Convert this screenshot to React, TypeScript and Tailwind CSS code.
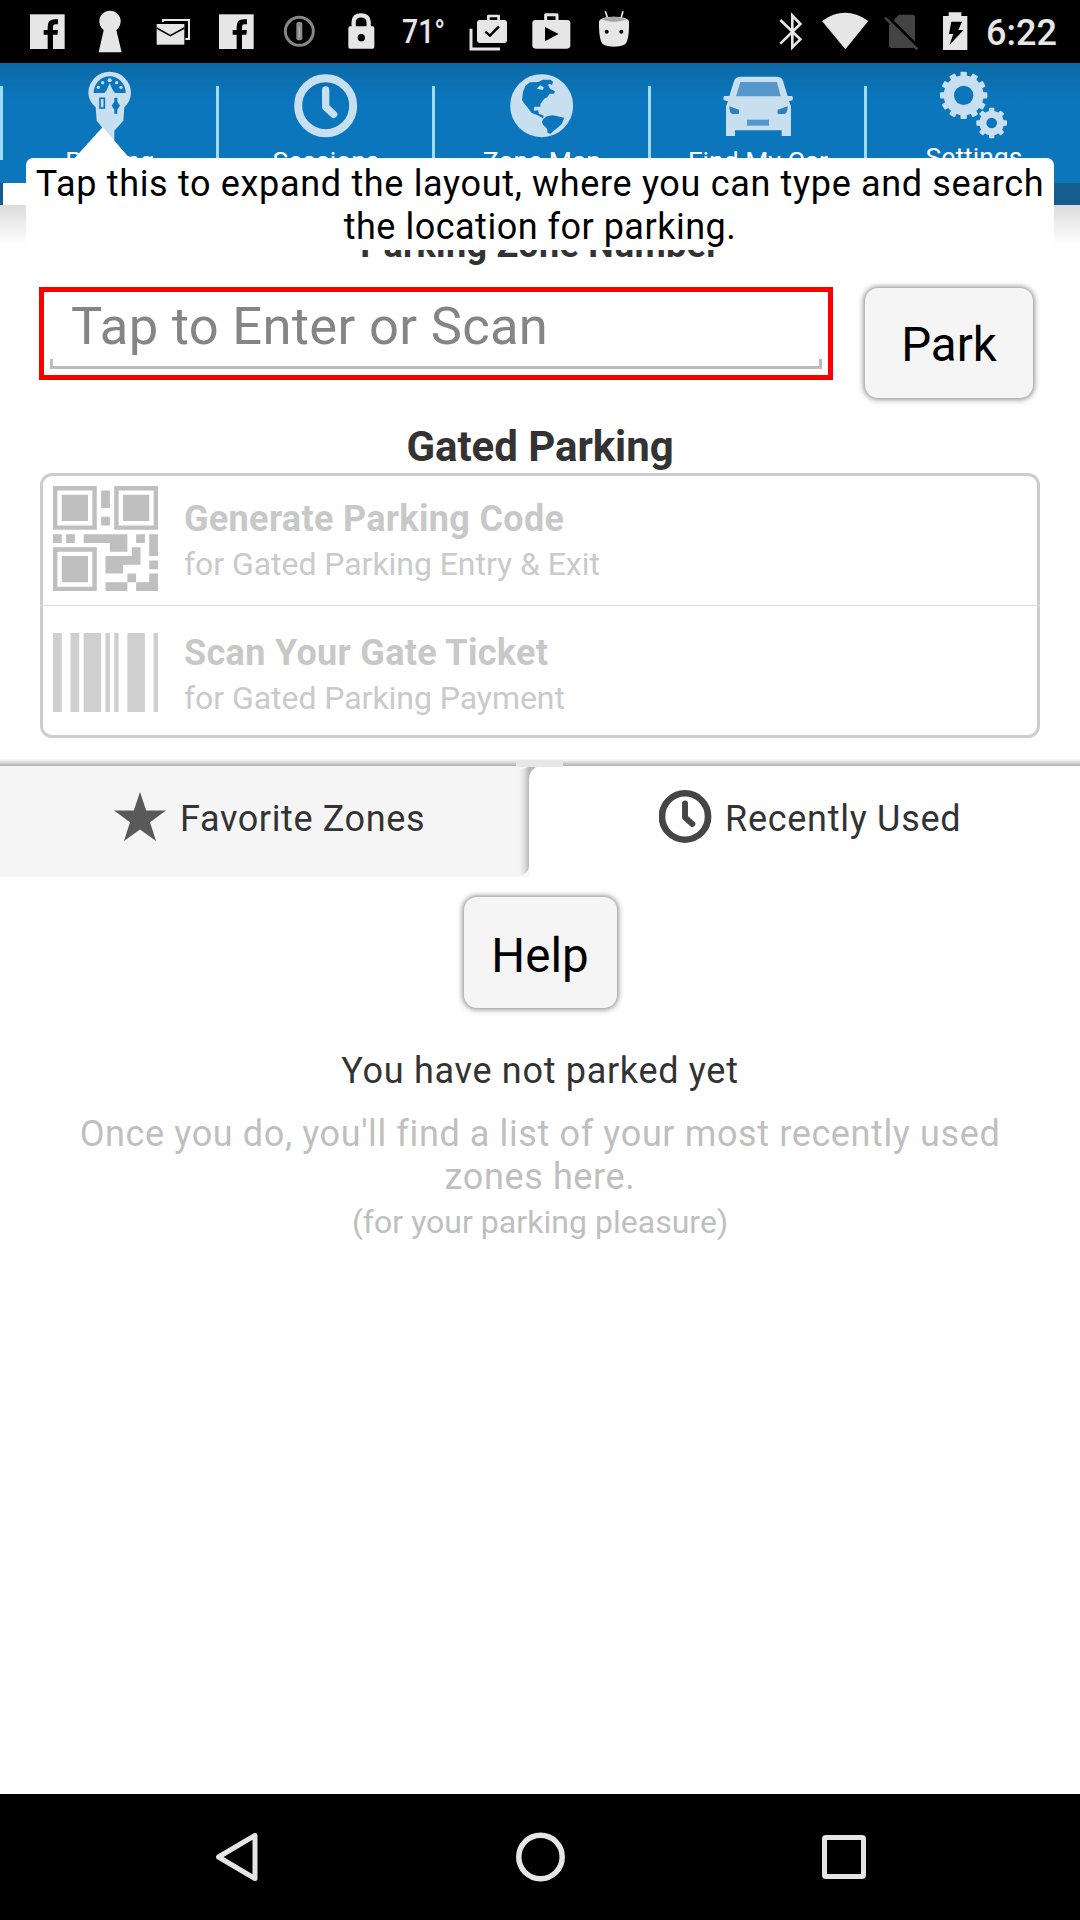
import type { ReactNode } from "react";

const INK = "#e6e6e6";
const PALE = "#c8dff0";
const BLUE = "#0b76bc";

/* Status-bar glyphs share one 3x coordinate space so each cell is a slice of the bar. */
function Glyph({ from, className, children }: { from: string; className: string; children: ReactNode }) {
  return (
    <svg viewBox={from} className={className} fill={INK} aria-hidden="true">
      {children}
    </svg>
  );
}

function FacebookMark({ x }: { x: number }) {
  return (
    <g transform={`translate(${x} 0)`}>
      <rect x="90" y="43" width="104" height="104" />
      <path
        d="M143 147V104H131V90H143V80Q143 58 164 58H174V73H166Q159 73 159 80V90H174L172 104H159V147Z"
        fill="#000"
      />
    </g>
  );
}

function StatusBar() {
  return (
    <div className="flex h-[63px] shrink-0 bg-black pl-5 text-[#e6e6e6]">
      <Glyph from="60 0 165 189" className="h-[63px] w-[55px]">
        <FacebookMark x={0} />
      </Glyph>
      <Glyph from="225 0 210 189" className="h-[63px] w-[70px]">
        <circle cx="330" cy="64" r="32" />
        <path d="M312 86H348L365 157H296Z" />
      </Glyph>
      <Glyph from="435 0 180 189" className="h-[63px] w-[60px]">
        <path d="M489 66V60H567V117H556" fill="none" stroke={INK} strokeWidth="6" />
        <rect x="470" y="72" width="83" height="62" />
        <path d="M470 84L511 107L553 84" fill="none" stroke="#000" strokeWidth="5" />
      </Glyph>
      <Glyph from="615 0 195 189" className="h-[63px] w-[65px]">
        <FacebookMark x={567} />
      </Glyph>
      <Glyph from="810 0 180 189" className="h-[63px] w-[60px]">
        <circle cx="898" cy="94" r="42" fill="none" stroke="#868686" strokeWidth="9" />
        <rect x="889" y="66" width="18" height="55" rx="6" fill="#8d8d8d" />
        <path d="M898 80V112" stroke="#b5b5b5" strokeWidth="3" />
      </Glyph>
      <Glyph from="990 0 180 189" className="h-[63px] w-[60px]">
        <path d="M1061 82V66Q1061 46 1083 46T1106 66V82" fill="none" stroke={INK} strokeWidth="13" />
        <rect x="1045" y="79" width="78" height="67" rx="5" />
        <circle cx="1084" cy="113" r="11" fill="#000" />
      </Glyph>
      <div className="flex w-[70px] items-center pl-[12px]">
        <span className="origin-left scale-x-[0.86] text-[33px] leading-[63px] font-medium">71°</span>
      </div>
      <Glyph from="1380 0 180 189" className="h-[63px] w-[60px]">
        <path d="M1413 86V147H1500" fill="none" stroke={INK} strokeWidth="9" />
        <path d="M1465 60V48H1496V60" fill="none" stroke={INK} strokeWidth="8" strokeLinejoin="round" />
        <rect x="1431" y="60" width="90" height="69" rx="9" />
        <path d="M1456 95L1470 107L1497 79" fill="none" stroke="#000" strokeWidth="7" />
      </Glyph>
      <Glyph from="1560 0 180 189" className="h-[63px] w-[60px]">
        <path d="M1637 60V44H1671V60" fill="none" stroke={INK} strokeWidth="9" strokeLinejoin="round" />
        <rect x="1597" y="60" width="114" height="86" rx="10" />
        <path d="M1635 81L1676 102L1635 124Z" fill="#000" />
      </Glyph>
      <Glyph from="1740 0 210 189" className="h-[63px] w-[70px]">
        <path d="M1816 34L1823 55M1869 34L1863 55" stroke={INK} strokeWidth="5" />
        <path d="M1797 64Q1800 50 1842 50T1887 64Q1888 104 1881 124Q1877 140 1842 140T1803 124Q1796 104 1797 64Z" />
        <path d="M1803 58Q1842 43 1881 58Q1842 74 1803 58Z" fill="#a5a5a5" />
        <circle cx="1820" cy="95" r="6" fill="#000" />
        <circle cx="1864" cy="95" r="6" fill="#000" />
      </Glyph>
      <div className="ml-auto flex w-[310px]">
        <Glyph from="2310 0 120 189" className="h-[63px] w-10 shrink-0">
          <path
            d="M2341 60L2401 118L2377 142V47L2401 72L2341 131"
            fill="none"
            stroke={INK}
            strokeWidth="8"
          />
        </Glyph>
        <Glyph from="2430 0 210 189" className="h-[63px] w-[70px] shrink-0">
          <path d="M2466 63Q2535 14 2605 63L2536 148Z" />
        </Glyph>
        <Glyph from="2640 0 150 189" className="h-[63px] w-[50px] shrink-0">
          <path d="M2697 44H2738Q2745 44 2745 51V136Q2745 144 2737 144H2675Q2667 144 2667 136V75Z" fill="#444" />
          <path d="M2660 50L2760 150" stroke="#000" strokeWidth="14" />
          <path d="M2655 53L2752 148" stroke="#444" strokeWidth="8" />
        </Glyph>
        <Glyph from="2790 0 150 189" className="h-[63px] w-[50px] shrink-0">
          <path d="M2846 37H2884V48H2902V150H2829V48H2846Z" />
          <path d="M2854 65H2886L2875 90H2891L2848 135L2860 102H2847Z" fill="#000" />
        </Glyph>
        <span className="pt-[2px] pl-[6px] text-[36px] leading-[63px] font-medium">6:22</span>
      </div>
    </div>
  );
}

function MeterIcon() {
  return (
    <svg viewBox="0 189 648 249" className="block h-[83px] w-[216px] overflow-visible" aria-hidden="true">
      <path
        d="M265 279A64 64 0 0 1 393 279Q392 304 373 322L370 362L343 392V450H314V392L290 362L287 322Q266 304 265 279Z"
        fill={PALE}
      />
      <path d="M281 279A48 50 0 0 1 377 279Z" fill={BLUE} />
      <g fill={PALE}>
        <circle cx="295" cy="262" r="5" />
        <circle cx="308" cy="248" r="5" />
        <circle cx="329" cy="241" r="6" />
        <circle cx="350" cy="248" r="5" />
        <circle cx="363" cy="262" r="5" />
        <path d="M329 250L338 270L345 279H313L320 270Z" />
      </g>
      <rect x="300" y="295" width="13" height="29" fill="none" stroke={BLUE} strokeWidth="5" />
      <path d="M343 293H352V305L360 317L352 329V341H343V329L335 317L343 305Z" fill={BLUE} />
      <path d="M308 381L390 476H222Z" fill="#fff" />
    </svg>
  );
}

function ClockIcon() {
  return (
    <svg viewBox="648 189 648 249" className="block h-[83px] w-[216px]" fill="none" stroke={PALE} aria-hidden="true">
      <circle cx="977" cy="317" r="82.5" strokeWidth="24" />
      <path d="M977 270V321L1001 343" strokeWidth="22" strokeLinecap="round" strokeLinejoin="round" />
    </svg>
  );
}

function GlobeIcon() {
  return (
    <svg viewBox="1296 189 648 249" className="block h-[83px] w-[216px]" aria-hidden="true">
      <circle cx="1625" cy="317" r="94.500" fill={PALE} />
      <g transform="translate(1080 0)" fill={BLUE}>
        <path d="M486 300L489 276L496 258L510 247L535 246L548 239L572 239L579 245L576 256L569 251L564 254L570 266L585 274L582 281L569 281L562 292L553 296L541 312L541 320L523 320L521 332L534 331L537 341L551 347L549 355L536 347L514 338L504 324L492 310Z" />
        <path d="M549 358L560 349L578 346L613 353L605 372L593 383L580 393L572 401L563 399L561 386L549 374L546 366Z" />
        <path d="M530 266L540 256L551 262L549 270Z" fill={PALE} />
      </g>
    </svg>
  );
}

function CarIcon() {
  return (
    <svg viewBox="1944 189 648 249" className="block h-[83px] w-[216px]" aria-hidden="true">
      <g transform="translate(2160 0)">
        <path
          d="M60 230H172Q186 231 189 243L203 288H216Q221 293 217 301L207 304L213 318V408H185V391H45V408H18V318L24 304L12 301Q8 293 13 288H28L42 243Q46 231 60 230Z"
          fill={PALE}
        />
        <path d="M61 246H171L182 289H48Z" fill="#5597cb" />
        <path d="M28 319L57 329V342H37Q28 340 28 319ZM203 319L173 329V342H193Q203 340 203 319Z" fill="#2c80bd" />
        <rect x="81" y="359" width="66" height="18" fill="#5597cb" />
      </g>
    </svg>
  );
}

type GearProps = {
  cx: number;
  cy: number;
  body: number;
  reach: number;
  hole: number;
  tooth: number;
  angles: number[];
};

function Gear({ cx, cy, body, reach, hole, tooth, angles }: GearProps) {
  return (
    <g transform={`translate(${cx} ${cy})`}>
      {angles.map((a) => (
        <rect key={a} x={-tooth / 2} y={-reach} width={tooth} height={reach} rx="3" transform={`rotate(${a})`} fill={PALE} />
      ))}
      <circle r={body} fill={PALE} />
      <circle r={hole} fill={BLUE} />
    </g>
  );
}

function GearsIcon() {
  return (
    <svg viewBox="2592 189 648 249" className="block h-[83px] w-[216px]" aria-hidden="true">
      <Gear cx={2891} cy={286} body={60} reach={71} hole={29} tooth={19} angles={[0, 30, 60, 90, 120, 150, 180, 210, 240, 270, 300, 330]} />
      <Gear cx={2975} cy={369} body={37} reach={46} hole={16} tooth={16} angles={[0, 45, 90, 135, 180, 225, 270, 315]} />
    </svg>
  );
}

const tabs = [
  { label: "Parking", icon: <MeterIcon />, lift: "" },
  { label: "Sessions", icon: <ClockIcon />, lift: "" },
  { label: "Zone Map", icon: <GlobeIcon />, lift: "" },
  { label: "Find My Car", icon: <CarIcon />, lift: "" },
  { label: "Settings", icon: <GearsIcon />, lift: "-mt-[4px]" },
];

function Header() {
  return (
    <header className="relative h-[142px] shrink-0 bg-[#0b76bc]">
      <div className="flex h-[120px] bg-linear-to-b from-[#0b69a5] to-[#0b76bc] to-30%">
        {tabs.map((t) => (
          <div key={t.label} className="relative w-[216px]">
            <span className="absolute top-[23px] left-0 h-[74px] w-[3px] bg-[#9fdcfb]" />
            {t.icon}
            <div className={`relative pl-[4px] text-center text-[26.5px] leading-[30px] text-white ${t.lift}`}>
              {t.label}
            </div>
          </div>
        ))}
      </div>
      <div className="flex h-[22px] bg-[#155d8f] pl-[3px]">
        <div className="w-[213px] bg-white" />
      </div>
      <div className="absolute top-[95px] left-[26px] z-10 h-[92px] w-[1028px] rounded-t-[7px] bg-white pt-[5px] text-center text-[36px] leading-[43px] whitespace-nowrap text-black">
        <p className="tracking-[0.67px]">Tap this to expand the layout, where you can type and search</p>
        <p className="tracking-[0.5px]">the location for parking.</p>
      </div>
    </header>
  );
}

function QrCode() {
  return (
    <svg viewBox="0 0 24 24" className="size-[105px]" fill="#bfbfbf" aria-hidden="true">
      <path
        fillRule="evenodd"
        d="M0 0H10V10H0ZM1 1V9H9V1ZM2 2H8V8H2ZM14 0H24V10H14ZM15 1V9H23V1ZM16 2H22V8H16ZM0 14H10V24H0ZM1 15V23H9V15ZM2 16H8V22H2Z"
      />
      <path d="M11 1H13V5H11ZM11 7H13V9H11ZM0 11H2V13H0ZM3 11H5V13H3ZM7 11H17V15H13V13H7ZM19 11H21V13H19ZM22 11H24V16H22ZM18 14H20V18H16V20H12V16H18ZM22 17H24V19H22ZM17 20H19V22H17ZM12 22H17V24H12ZM19 22H22V20H24V24H19Z" />
    </svg>
  );
}

function Barcode() {
  return (
    <svg viewBox="0 0 24 18" className="mt-[4px] h-[79px] w-[105px]" preserveAspectRatio="none" fill="#cfcfcf" aria-hidden="true">
      <path d="M0 0H2V18H0ZM4 0H6V18H4ZM7 0H11V18H7ZM12 0H13V18H12ZM14 0H15V18H14ZM17 0H21V18H17ZM23 0H24V18H23Z" />
    </svg>
  );
}

function Option({ icon, title, detail, lead }: { icon: ReactNode; title: string; detail: string; lead: string }) {
  return (
    <>
      {icon}
      <div className={`ml-[26px] ${lead}`}>
        <p className="text-[36px] leading-[44px] font-bold tracking-[0.32px] text-[#c8c8c8]">{title}</p>
        <p className="mt-[2px] text-[32px] leading-[42px] tracking-[-0.05px] text-[#cacaca]">{detail}</p>
      </div>
    </>
  );
}

const raised =
  "flex items-center justify-center rounded-[13px] bg-[#f5f5f5] text-[47.5px] leading-none text-black shadow-[0_0_5px_1px_rgba(0,0,0,0.4),0_1px_9px_1px_rgba(0,0,0,0.14)]";

export default function App() {
  return (
    <div className="flex h-[1920px] w-[1080px] flex-col overflow-hidden bg-white font-['Roboto',sans-serif]">
      <StatusBar />
      <Header />
      <main className="flex flex-1 flex-col bg-linear-to-b from-[#dcdcdc] to-white to-[40px] pt-[19px]">
        <h2 className="text-center text-[36px] leading-[42px] font-bold tracking-[0.3px] text-[#333]">
          Parking Zone Number
        </h2>
        <div className="mt-[21px] flex h-[111px] pl-[39px]">
          <div className="flex h-[93px] w-[794px] flex-col border-[5px] border-[#fa0000] px-[6px]">
            <div className="h-[67px] pt-[3px] pl-[21px] text-[52.5px] leading-[62px] tracking-[0.32px] text-[#858585]">
              Tap to Enter or Scan
            </div>
            <div className="h-[10px] border-3 border-t-0 border-[#bcbcbc]" />
          </div>
          <button className={`mt-px ml-[32px] h-[110px] w-[168px] pt-[6px] ${raised}`}>Park</button>
        </div>
        <h2 className="mt-[28px] text-center text-[42px] leading-[42px] font-bold tracking-[-0.05px] text-[#333]">
          Gated Parking
        </h2>
        <div className="mx-[40px] mt-[5px] h-[265px] rounded-[12px] border-3 border-[#cdcdcd]">
          <div className="-mx-[3px] flex h-[130px] items-start border-b border-[#dcdcdc] pt-[10px] pl-[13px]">
            <Option
              icon={<QrCode />}
              title="Generate Parking Code"
              detail="for Gated Parking Entry & Exit"
              lead="mt-[11px]"
            />
          </div>
          <div className="-mx-[3px] flex h-[129px] items-center pl-[13px]">
            <Option
              icon={<Barcode />}
              title="Scan Your Gate Ticket"
              detail="for Gated Parking Payment"
              lead="mt-[8px]"
            />
          </div>
        </div>

        <div className="relative mt-[21px] flex h-[118px] flex-col">
          <div className="h-[7px] bg-linear-to-b from-white via-[#d8d8d8] to-[#b0b0b0]" />
          <div className="flex h-[111px] bg-[#f5f5f5]">
            <div className="flex w-[529px] items-center pb-[7px] pl-[114px]">
              <svg viewBox="0 0 52 51" className="mb-[4px] h-[49px] w-[52px]" fill="#595959" preserveAspectRatio="none" aria-hidden="true">
                <path d="M26 0L32.200 19.300L52 19.300L36 31.400L42 51L26 39L10 51L16 31.400L0 19.300L19.800 19.300Z" />
              </svg>
              <span className="mt-px ml-[14px] text-[36px] leading-[42px] tracking-[0.63px] text-[#333]">
                Favorite Zones
              </span>
            </div>
            <div className="relative flex w-[551px] items-center bg-white pb-[7px] pl-[130px]">
              <svg viewBox="0 0 24 111" className="absolute top-0 -left-[14px] h-[111px] w-[24px]" aria-hidden="true">
                <defs>
                  <linearGradient id="edge" gradientUnits="userSpaceOnUse" x1="4" x2="14" y1="0" y2="0">
                    <stop offset="0" stopColor="#f5f5f5" />
                    <stop offset="0.5" stopColor="#e2e2e2" />
                    <stop offset="1" stopColor="#b8b8b8" />
                  </linearGradient>
                </defs>
                <path d="M0 0H24Q14 2 14 14V102Q13 108 6 111H0Z" fill="#f5f5f5" />
                <path d="M3 6Q6 1 24 0Q14 3 14 14V101Q13 107 7 109Q3 104 3 98Z" fill="url(#edge)" />
              </svg>
              <svg viewBox="0 0 54 56" className="mb-[3px] h-[53px] w-[53px]" fill="none" stroke="#454545" preserveAspectRatio="none" aria-hidden="true">
                <ellipse cx="26.500" cy="28" rx="23.500" ry="24.500" strokeWidth="6.800" />
                <path d="M26.500 14V29L34 36" strokeWidth="6" strokeLinecap="round" strokeLinejoin="round" />
              </svg>
              <span className="mt-px ml-[13px] text-[36px] leading-[42px] tracking-[0.72px] text-[#333]">
                Recently Used
              </span>
            </div>
          </div>
          <span className="absolute top-px left-[516px] h-[7px] w-[47px] bg-[#e7e7e7]" />
        </div>

        <button className={`mt-[20px] h-[111px] w-[153px] self-center pt-[8px] ${raised}`}>Help</button>
        <p className="mt-[41px] text-center text-[36px] leading-[44px] tracking-[0.7px] text-[#333]">
          You have not parked yet
        </p>
        <p className="mx-[60px] mt-[20px] text-center text-[36px] leading-[43px] tracking-[0.62px] text-[#bfbfbf]">
          Once you do, you'll find a list of your most recently used zones here.
        </p>
        <p className="mt-[4px] text-center text-[32px] leading-[38px] tracking-[0.03px] text-[#bfbfbf]">
          (for your parking pleasure)
        </p>
      </main>
      <nav className="flex h-[126px] shrink-0 items-center bg-black pl-[215px]">
        <svg viewBox="0 0 43 50" className="h-[50px] w-[43px]" fill="none" stroke={INK} strokeWidth="5" strokeLinejoin="round" aria-hidden="true">
          <path d="M40 3.500V46.500L3.500 25Z" />
        </svg>
        <svg viewBox="0 0 50 50" className="ml-[257px] size-[50px]" fill="none" stroke={INK} strokeWidth="5.500" aria-hidden="true">
          <circle cx="25.500" cy="25" r="21.700" />
        </svg>
        <svg viewBox="0 0 44 44" className="ml-[257px] size-[44px]" fill="none" stroke={INK} strokeWidth="5" aria-hidden="true">
          <rect x="2.500" y="2.500" width="39" height="39" rx="1.500" />
        </svg>
      </nav>
    </div>
  );
}
